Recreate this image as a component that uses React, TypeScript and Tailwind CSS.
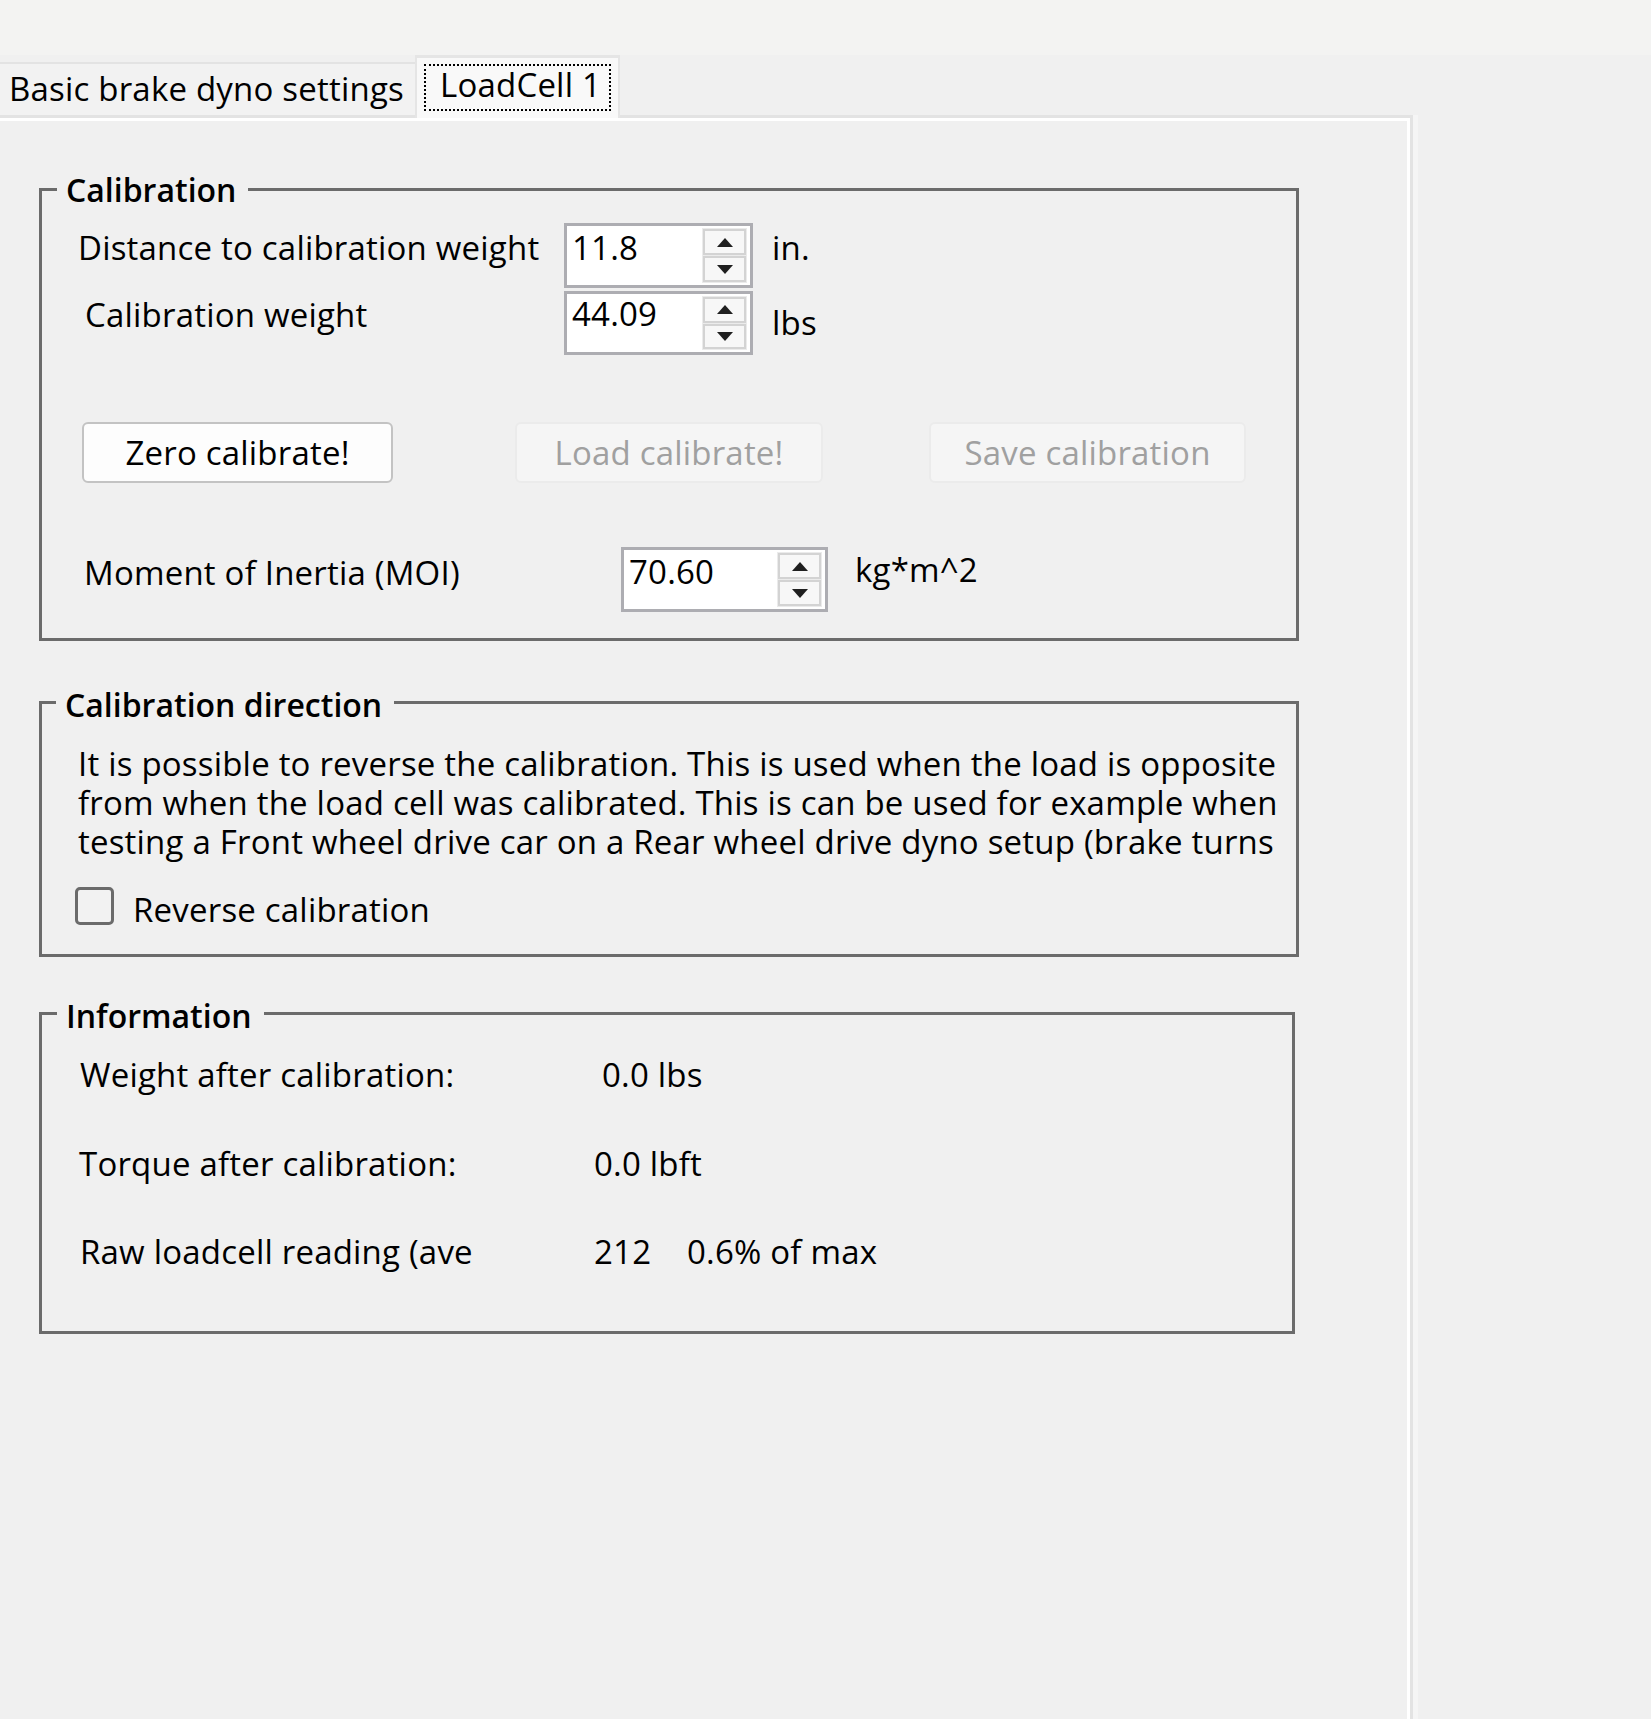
import React from 'react';

const Arrow = ({ down }: { down?: boolean }) => (
    <svg width="16" height="9" viewBox="0 0 16 9">
        <polygon points={down ? '0,0 16,0 8,9' : '8,0 16,9 0,9'} fill="#1f1f1f" />
    </svg>
);

const Spin = ({ value, box, pad }: { value: string; box: string; pad: string }) => (
    <div className={`flex border-[3px] border-[#adadb2] bg-white ${box}`}>
        <div className={`flex-1 pl-[5px] leading-[40px] ${pad}`}>{value}</div>
        <div className="my-[2px] mr-[3px] flex w-[45px] flex-col gap-[1px] bg-[#ebebeb] p-[1px]">
            <div className="flex flex-1 items-center justify-center border-2 border-[#d3d3d3] bg-[#f7f7f7]">
                <Arrow />
            </div>
            <div className="flex flex-1 items-center justify-center border-2 border-[#d3d3d3] bg-[#f7f7f7]">
                <Arrow down />
            </div>
        </div>
    </div>
);

const Group = ({ title, box, legend, children }: { title: string; box: string; legend: string; children: React.ReactNode }) => (
    <fieldset className={`ml-[39px] border-[3px] border-[#6b6b6b] ${box}`}>
        <legend className={`pl-[9px] pr-[12px] text-[32px] font-semibold leading-[40px] tracking-normal ${legend}`}>{title}</legend>
        {children}
    </fieldset>
);

export default function App() {
    return (
        <div className="flex h-[1719px] w-[1651px] flex-col overflow-hidden bg-[#f0f0f0] font-['Open_Sans',sans-serif] text-[33px] tracking-[0.2px] text-black">
            <div className="h-[55px] bg-[#f3f3f2]" />

            {/* tabs */}
            <div className="flex h-[60px] items-end">
                <div className="h-[53px] w-[415px] border-t-2 border-[#e3e3e3] bg-[#f2f2f2] pl-[9px] pt-[5px] leading-[40px] whitespace-nowrap">
                    Basic brake dyno settings
                </div>
                <div className="relative z-10 -mb-[3px] h-[63px] w-[205px] border-x-2 border-t-[3px] border-[#e5e5e5] bg-[#f9f9f9] pl-[7px] pt-[6px]">
                    <div className="h-[47px] w-[187px] border-2 border-dotted border-black pl-[14px] leading-[38px] whitespace-nowrap">
                        LoadCell 1
                    </div>
                </div>
            </div>

            {/* panel */}
            <div className="w-[1418px] flex-1 border-r-[5px] border-[#f5f5f5]">
                <div className="h-full border-r-[3px] border-t-[3px] border-[#e3e3e3]">
                    <div className="h-full border-r-[3px] border-t-[3px] border-white pt-[47px]">
                        <Group title="Calibration" box="h-[473px] w-[1260px]" legend="ml-[15px] pt-[2px]">
                            <div className="mt-[13px] flex items-start">
                                <div className="ml-[36px] mt-[5px] w-[486px] leading-[40px] whitespace-nowrap">
                                    Distance to calibration weight
                                </div>
                                <Spin value="11.8" box="h-[65px] w-[189px]" pad="pt-[2px]" />
                                <div className="ml-[19px] mt-[5px] leading-[40px]">in.</div>
                            </div>
                            <div className="mt-[3px] flex items-start">
                                <div className="ml-[43px] mt-[4px] w-[479px] leading-[40px] whitespace-nowrap">
                                    Calibration weight
                                </div>
                                <Spin value="44.09" box="h-[64px] w-[189px]" pad="pt-0" />
                                <div className="ml-[19px] mt-[12px] leading-[40px]">lbs</div>
                            </div>

                            <div className="mt-[67px] flex">
                                <div className="ml-[40px] flex h-[61px] w-[311px] items-center justify-center rounded-[6px] border-2 border-[#c3c3c3] bg-[#fdfdfd]">
                                    Zero calibrate!
                                </div>
                                <div className="ml-[122px] flex h-[61px] w-[308px] items-center justify-center rounded-[6px] border-2 border-[#ebebeb] bg-[#f5f5f5] text-[#a0a0a0]">
                                    Load calibrate!
                                </div>
                                <div className="ml-[106px] flex h-[61px] w-[317px] items-center justify-center rounded-[6px] border-2 border-[#ebebeb] bg-[#f5f5f5] text-[#a0a0a0]">
                                    Save calibration
                                </div>
                            </div>

                            <div className="mt-[64px] flex items-start">
                                <div className="ml-[42px] mt-[6px] w-[537px] leading-[40px] whitespace-nowrap">
                                    Moment of Inertia (MOI)
                                </div>
                                <Spin value="70.60" box="h-[65px] w-[207px]" pad="pt-[2px]" />
                                <div className="ml-[27px] mt-[3px] leading-[40px]">kg*m^2</div>
                            </div>
                        </Group>

                        <div className="h-[38px]" />

                        <Group title="Calibration direction" box="h-[278px] w-[1260px]" legend="ml-[14px] pt-[6px]">
                            <div className="ml-[36px] mt-[19px] leading-[39px] whitespace-nowrap">
                                <div>It is possible to reverse the calibration. This is used when the load is opposite</div>
                                <div>from when the load cell was calibrated. This is can be used for example when</div>
                                <div>testing a Front wheel drive car on a Rear wheel drive dyno setup (brake turns</div>
                            </div>
                            <div className="mt-[26px] flex items-start">
                                <div className="ml-[33px] h-[38px] w-[39px] rounded-[5px] border-[3px] border-[#6b6b6b] bg-[#f2f2f2]" />
                                <div className="ml-[19px] mt-[3px] leading-[40px]">Reverse calibration</div>
                            </div>
                        </Group>

                        <div className="h-[33px]" />

                        <Group title="Information" box="h-[344px] w-[1256px]" legend="ml-[15px] pt-[6px]">
                            <div className="ml-[38px] mt-[19px] flex leading-[40px] whitespace-nowrap">
                                <div className="w-[514px]">Weight after calibration:</div>
                                <div className="pl-[8px]">0.0 lbs</div>
                            </div>
                            <div className="ml-[37px] mt-[49px] flex leading-[40px] whitespace-nowrap">
                                <div className="w-[515px]">Torque after calibration:</div>
                                <div>0.0 lbft</div>
                            </div>
                            <div className="ml-[38px] mt-[48px] flex leading-[40px] whitespace-nowrap">
                                <div className="w-[514px]">Raw loadcell reading (ave</div>
                                <div className="w-[93px]">212</div>
                                <div>0.6% of max</div>
                            </div>
                        </Group>
                    </div>
                </div>
            </div>
        </div>
    );
}
